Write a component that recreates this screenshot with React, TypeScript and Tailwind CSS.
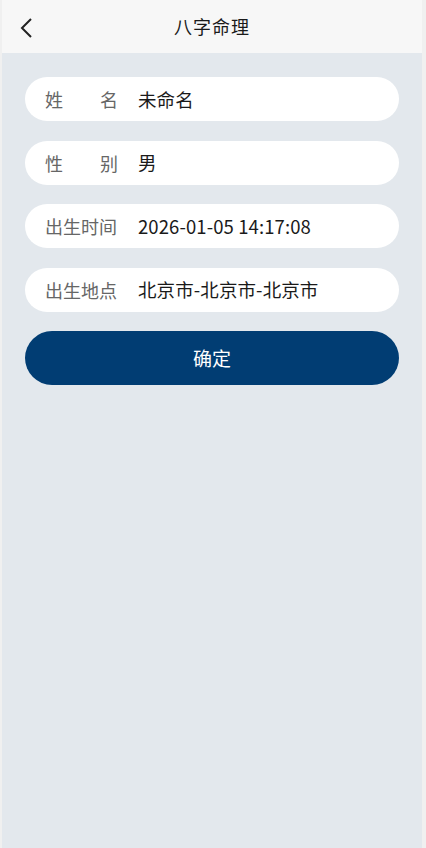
import { JSX } from 'react'

type Field = {
  label: string
  value: string
  spread?: boolean
}

const FIELDS: Field[] = [
  { label: '姓名', value: '未命名', spread: true },
  { label: '性别', value: '男', spread: true },
  { label: '出生时间', value: '2026-01-05 14:17:08' },
  { label: '出生地点', value: '北京市-北京市-北京市' }
]

const FONT = { fontFamily: '"Noto Sans CJK SC", "Noto Sans", sans-serif' }

function FieldRow({ field }: { field: Field }): JSX.Element {
  return (
    <div className="flex h-[44px] items-center rounded-full bg-white pl-[20px] pr-4">
      <div
        className={`flex w-[73px] shrink-0 text-[18px] leading-none text-[#666666] ${
          field.spread ? 'justify-between' : ''
        }`}
      >
        {field.label.split('').map((ch, i) => (
          <span key={i}>{ch}</span>
        ))}
      </div>
      <div className="ml-[20px] text-[18.5px] leading-none tracking-[0.1px] text-[#1a1a1a]">
        {field.value}
      </div>
    </div>
  )
}

export default function App(): JSX.Element {
  return (
    <div className="flex h-[848px] w-[426px] bg-[#f0f0f0] px-[2px] pr-[4px]" style={FONT}>
      <div className="flex flex-1 flex-col bg-[#e3e8ed]">
        <header className="relative flex h-[53px] shrink-0 items-center justify-center bg-[#f7f7f7]">
          <svg
            className="absolute left-[17px] top-[17px]"
            width="16"
            height="22"
            viewBox="0 0 16 22"
            fill="none"
            stroke="#222"
            strokeWidth="2"
          >
            <path d="M12 2 L3 11 L12 20" />
          </svg>
          <h1 className="text-[18px] tracking-[1px] text-[#1a1a1a]">八字命理</h1>
        </header>

        <div className="flex flex-col gap-[19.5px] px-[23px] pt-[24px]">
          {FIELDS.map((f) => (
            <FieldRow key={f.label} field={f} />
          ))}
          <button className="h-[54px] rounded-full bg-[#013d73] text-[19px] text-white">
            确定
          </button>
        </div>
      </div>
    </div>
  )
}
